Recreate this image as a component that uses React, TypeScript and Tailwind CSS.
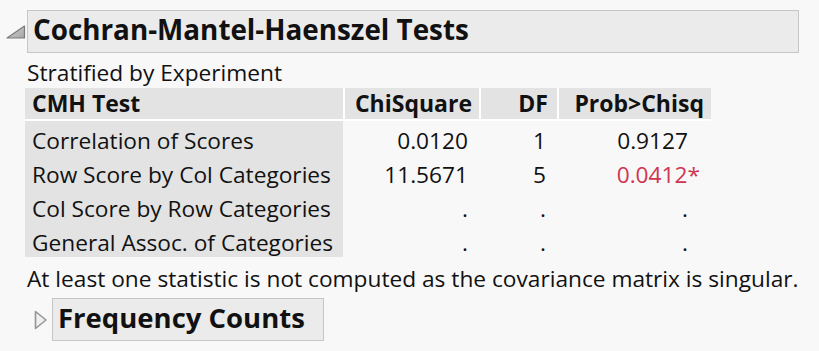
const rows = [
  { test: "Correlation of Scores", chi: "0.0120", df: "1", prob: "0.9127", sig: false },
  { test: "Row Score by Col Categories", chi: "11.5671", df: "5", prob: "0.0412", sig: true },
  { test: "Col Score by Row Categories", chi: ".", df: ".", prob: ".", sig: false },
  { test: "General Assoc. of Categories", chi: ".", df: ".", prob: ".", sig: false },
];

function OpenTriangle() {
  return (
    <svg width="21" height="18" viewBox="0 0 21 18" className="shrink-0">
      <defs>
        <linearGradient id="tri" x1="0" y1="0" x2="1" y2="1">
          <stop offset="0" stopColor="#d6d6d6" />
          <stop offset="1" stopColor="#a4a4a4" />
        </linearGradient>
      </defs>
      <polygon points="2,15 19.5,15 19.5,3" fill="url(#tri)" stroke="#7a7a7a" strokeWidth="1.2" strokeLinejoin="round" />
    </svg>
  );
}

function ClosedTriangle() {
  return (
    <svg width="14" height="20" viewBox="0 0 14 20" className="shrink-0">
      <polygon points="1.5,1.5 12,10 1.5,18.5" fill="#efefef" stroke="#959595" strokeWidth="1.6" strokeLinejoin="round" />
    </svg>
  );
}

export default function App() {
  return (
    <div className="w-[819px] h-[351px] overflow-hidden bg-[#f8f8f8] text-[#111] font-['Open_Sans',sans-serif]">
      {/* outline header */}
      <div className="flex items-center pt-[10px] pl-[5px]">
        <OpenTriangle />
        <div className="ml-[1px] w-[772px] h-[43px] border border-[#c6c6c6] bg-[#ebebeb] pl-[5px] text-[27.8px] font-bold leading-[37px]">
          Cochran-Mantel-Haenszel Tests
        </div>
      </div>

      <div className="pl-[25px] text-[22.7px]">
        <div className="h-[35px] pl-[2px] pt-[5px] leading-[30px]">Stratified by Experiment</div>

        {/* table */}
        <div className="w-[686px]">
          <div className="grid grid-cols-[318px_134px_76px_152px] gap-x-[2px] border-b-2 border-white bg-white font-bold text-[23px] leading-[31px]">
            <div className="h-[31px] bg-[#e3e3e3] pl-[7px]">CMH Test</div>
            <div className="h-[31px] bg-[#e3e3e3] pr-[7px] text-right">ChiSquare</div>
            <div className="h-[31px] bg-[#e3e3e3] pr-[9px] text-right">DF</div>
            <div className="h-[31px] bg-[#e3e3e3] pr-[7px] text-right">Prob&gt;Chisq</div>
          </div>
          <div className="grid grid-cols-[318px_136px_78px_152px]">
            {rows.map((r) => (
              <div key={r.test} className="contents">
                <div className="h-[34px] bg-[#e3e3e3] pl-[7px] pt-[6px] leading-[28px] whitespace-nowrap">{r.test}</div>
                <div className="h-[34px] pr-[11px] pt-[6px] text-right leading-[28px]">{r.chi}</div>
                <div className="h-[34px] pr-[11px] pt-[6px] text-right leading-[28px]">{r.df}</div>
                <div className="h-[34px] pr-[21px] pt-[6px] text-right leading-[28px]">
                  {r.sig ? (
                    <span className="text-[#cf3550]">
                      {r.prob}
                      <span className="-mr-[12px]">*</span>
                    </span>
                  ) : (
                    r.prob
                  )}
                </div>
              </div>
            ))}
          </div>
        </div>

        <div className="h-[41px] pl-[2px] pt-[8px] leading-[28px] whitespace-nowrap">
          At least one statistic is not computed as the covariance matrix is singular.
        </div>
      </div>

      {/* collapsed outline */}
      <div className="flex items-center pl-[34px]">
        <ClosedTriangle />
        <div className="ml-[4px] w-[272px] h-[43px] border border-[#c6c6c6] bg-[#ebebeb] pl-[5px] text-[27.5px] font-bold leading-[37px]">
          Frequency Counts
        </div>
      </div>
    </div>
  );
}
